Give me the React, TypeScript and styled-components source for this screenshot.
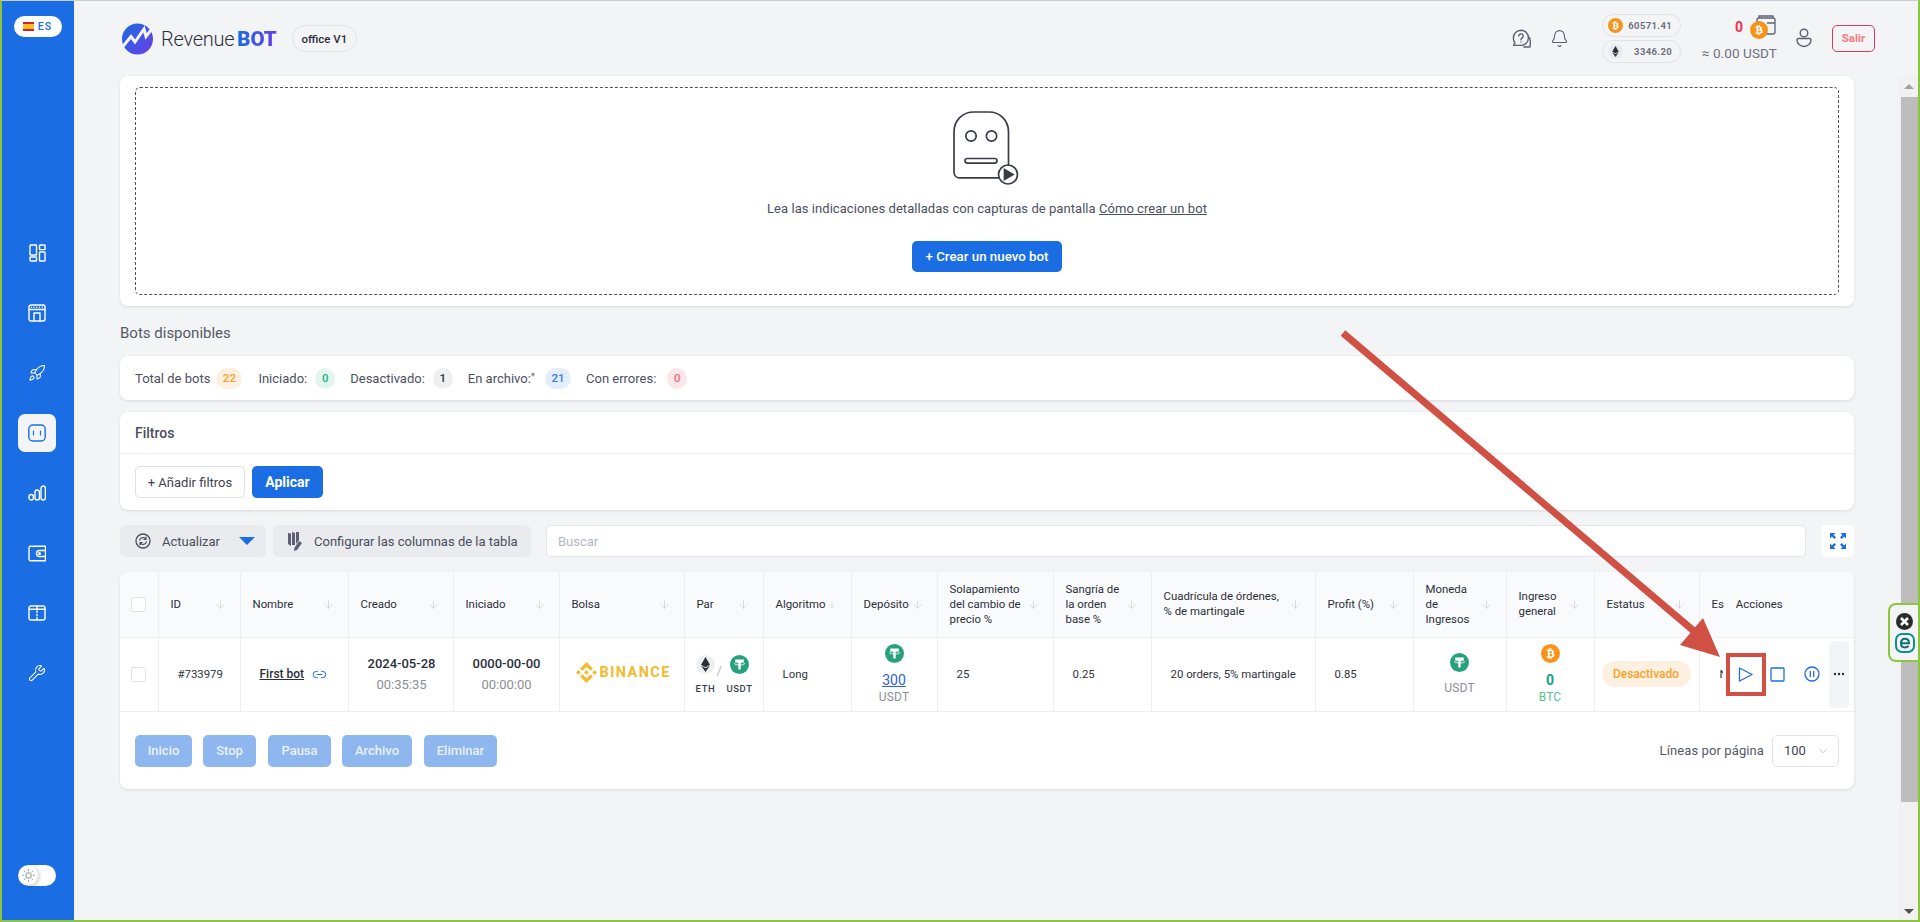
import React from "react";
import styled, { createGlobalStyle } from "styled-components";
import { ArrowDown, Bell, ChevronDown, Link2, Rocket, Wrench } from "lucide-react";
import { FaBtc, FaEthereum } from "react-icons/fa";
import { SiBinance } from "react-icons/si";

const Global = createGlobalStyle`
  html, body { margin: 0; padding: 0; height: 100%; overflow: hidden; background: #f3f4f6; }
  * { box-sizing: border-box; }
  body { font-family: Roboto, "Liberation Sans", sans-serif; color: #2b2f3a; }
`;

const BLUE = "#1a6de3";

const Frame = styled.div`
  position: relative; display: flex; width: 1920px; height: 922px; overflow: hidden;
  background: #f3f4f6; border-top: 1px solid #c9ccd0; border-left: 2px solid #8cc63f;
  border-right: 2px solid #8cc63f; border-bottom: 2px solid #8cc63f;
`;
const Sidebar = styled.aside`
  flex: 0 0 72px; background: ${BLUE}; display: flex; flex-direction: column; align-items: center;
  padding: 15px 2px 34px 0;
`;
const LangPill = styled.div`
  width: 48px; height: 21px; margin-left: 1px; border-radius: 11px; background: #fff; display: flex; align-items: center; justify-content: center; gap: 4px;
  color: ${BLUE}; font-size: 10.5px; font-weight: 500; letter-spacing: 1px;
`;
const Flag = styled.span`
  width: 11px; height: 9px; background: linear-gradient(#d8202c 25%, #f6c02c 25%, #f6c02c 75%, #d8202c 75%);
`;
const NavList = styled.nav`
  display: flex; flex-direction: column; align-items: center; margin-top: 197px; gap: 22px;
`;
const NavItem = styled.div<{ $active?: boolean }>`
  width: 38px; height: 38px; border-radius: 7px; display: flex; align-items: center; justify-content: center;
  color: ${p => (p.$active ? BLUE : "#fff")}; background: ${p => (p.$active ? "#f3f4f6" : "transparent")};
`;
const Toggle = styled.div`
  margin-top: auto; width: 38px; height: 21px; border-radius: 11px; background: #fff; display: flex; align-items: center; padding-left: 1px;
`;
const Knob = styled.div`
  width: 19px; height: 19px; border-radius: 50%; background: #fff; box-shadow: 1px 1px 4px rgba(0,0,0,.25); display: flex; align-items: center; justify-content: center;
`;
const Main = styled.main`
  flex: 1; min-width: 0; padding: 0 64px 0 46px; display: flex; flex-direction: column;
`;
const Header = styled.header`
  height: 75px; flex: none; display: flex; align-items: center; position: relative;
`;
const Logo = styled.div`
  display: flex; align-items: center;
`;
const LogoWord = styled.span`
  font-size: 20px; font-weight: 300; margin-left: 7px; color: #2e3140; letter-spacing: -0.25px;
`;
const LogoBot = styled.span`
  font-size: 20.5px; font-weight: 900; margin-left: 3px;
  background: linear-gradient(90deg, ${BLUE}, #6a3de8); -webkit-background-clip: text; background-clip: text; color: transparent;
`;
const Office = styled.div`
  margin-left: 15px; height: 27px; width: 65px; border-radius: 14px; border: 1px solid #e1e3e8; display: flex; align-items: center; justify-content: center; font-size: 11.5px; font-weight: 500; color: #2b2f3a;
`;
const HeaderRight = styled.div`
  margin-left: auto; margin-right: -21px; display: flex; align-items: center;
`;
const IconBtn = styled.div<{ $ml?: number }>`
  display: flex; margin-left: ${p => p.$ml ?? 0}px; color: #5d6074; margin-top: -1px;
`;
const Rates = styled.div`
  margin-left: 33px; display: flex; flex-direction: column; gap: 3px; margin-top: -1px;
`;
const Rate = styled.div`
  width: 79px; height: 23px; border-radius: 12px; border: 1px solid #dfe1e6; padding: 0 8px 0 5px; display: flex; align-items: center; justify-content: space-between;
  font-size: 9.5px; font-weight: 700; letter-spacing: .35px; color: #6d7280;
`;
const Coin = styled.span<{ $size: number; $bg: string; $fg?: string }>`
  width: ${p => p.$size}px; height: ${p => p.$size}px; flex: none; border-radius: 50%; background: ${p => p.$bg}; color: ${p => p.$fg ?? "#fff"}; display: inline-flex; align-items: center; justify-content: center;
`;
const Balance = styled.div`
  margin-left: 21px; width: 75px; display: flex; flex-direction: column; align-items: flex-end; margin-top: -1px;
`;
const BalanceTop = styled.div`
  position: relative; height: 29px; width: 100%; display: flex; align-items: flex-start; padding-left: 33px; padding-top: 4px;
  color: #f5304f; font-size: 14px; font-weight: 700;
`;
const WalletCoin = styled.div`
  position: absolute; left: 48px; top: 6px; display: flex;
`;
const WalletGlyph = styled.svg`
  position: absolute; left: 3px; top: -6px;
`;
const CoinOver = styled.span`
  position: relative; display: flex;
`;
const BalanceValue = styled.div`
  font-size: 13.5px; color: #6b7082; white-space: nowrap; letter-spacing: .1px; margin-top: 1px;
`;
const Salir = styled.button`
  margin-left: 20px; width: 43px; height: 27px; border-radius: 5px; border: 1px solid #dc3a5b; background: transparent; color: #f77b84; font: 700 11.5px Roboto, sans-serif; padding: 0; margin-top: -1px;
`;
const Card = styled.section`
  background: #fff; border-radius: 8px; box-shadow: 0 1px 3px rgba(40,45,60,.12);
`;
const Hero = styled(Card)`
  flex: none; height: 230px; padding: 11px 15px;
`;
const Dashed = styled.div`
  height: 100%; border: 1px dashed #4f5259; border-radius: 5px; display: flex; flex-direction: column; align-items: center; padding-top: 23px;
`;
const HeroText = styled.p`
  margin: 13px 0 0; font-size: 13px; line-height: 20px; color: #4c5060; letter-spacing: .05px;
`;
const HeroLink = styled.a`
  color: #4c5060; text-decoration: underline;
`;
const Primary = styled.button<{ $w?: number }>`
  height: 31px; width: ${p => p.$w ?? 150}px; background: ${BLUE}; border: 0; border-radius: 5px; color: #fff; font: 500 14px Roboto, sans-serif; padding: 0;
`;
const HeroBtn = styled(Primary)`
  margin-top: 22px; font-size: 13.3px;
`;
const Title = styled.h2`
  flex: none; height: 50px; margin: 0; padding-top: 17px; font-size: 15px; line-height: 20px; font-weight: 400; color: #555a66;
`;
const StatsCard = styled(Card)`
  flex: none; height: 44px; padding: 0 15px; display: flex; align-items: center; font-size: 13px; color: #4c5060;
`;
const StatLabel = styled.span<{ $ml?: number }>`
  margin-left: ${p => p.$ml ?? 0}px;
`;
const Badge = styled.span<{ $bg: string; $fg: string; $w: number; $ml: number }>`
  width: ${p => p.$w}px; height: 21px; margin-left: ${p => p.$ml}px; border-radius: 11px; background: ${p => p.$bg}; color: ${p => p.$fg}; font-size: 11.5px; font-weight: 500; display: flex; align-items: center; justify-content: center;
`;
const Filters = styled(Card)`
  flex: none; height: 98px; margin-top: 12px; display: flex; flex-direction: column;
`;
const FiltersHead = styled.div`
  height: 43px; border-bottom: 1px solid #eceef2; padding-left: 15px; display: flex; align-items: center; font-size: 14px; font-weight: 500; color: #4a4e5c;
`;
const FiltersBody = styled.div`
  padding: 12px 15px; display: flex; gap: 7px;
`;
const Ghost = styled.button`
  height: 32px; width: 110px; background: #fff; border: 1px solid #dfe1e6; border-radius: 5px; font: 400 13px Roboto, sans-serif; color: #3f4350; padding: 0;
`;
const Apply = styled(Primary)`
  height: 32px; width: 71px; font-weight: 700;
`;
const Toolbar = styled.div`
  flex: none; height: 32px; margin-top: 15px; display: flex; gap: 7px;
`;
const ToolButton = styled.div<{ $w: number }>`
  width: ${p => p.$w}px; flex: none; background: #e9ebef; border-radius: 5px; display: flex; align-items: center; padding-left: 15px; gap: 11px; font-size: 13px; color: #4a4e5c;
`;
const Caret = styled.span`
  margin-left: 8px; border-left: 8px solid transparent; border-right: 8px solid transparent; border-top: 8px solid ${BLUE};
`;
const Search = styled.div`
  flex: 1; margin-left: 8px; background: #fff; border: 1px solid #e3e5ea; border-radius: 5px; display: flex; align-items: center; padding-left: 11px; font-size: 13px; color: #b4b7bf;
`;
const Expand = styled.div`
  flex: none; width: 33px; margin-left: 8px; background: #fff; border-radius: 5px; display: flex; align-items: center; justify-content: center;
`;
const TableCard = styled(Card)`
  flex: none; height: 217px; margin-top: 15px; overflow: hidden;
`;
const Table = styled.table`
  width: 1734px; border-collapse: collapse; table-layout: fixed; font-size: 11.4px;
`;
const Th = styled.th`
  height: 65px; background: #f9fafc; padding: 0 13px 0 12px; font-weight: 400; font-size: 11.4px; line-height: 15px; text-align: left; color: #2b2f3a; border-right: 1px solid #eceef3; border-bottom: 1px solid #eceef3;
  &:first-child { padding-left: 11px; }
  &:last-child { border-right: 0; }
`;
const HeadInner = styled.div`
  display: flex; align-items: center; justify-content: space-between; gap: 2px;
`;
const ActionHead = styled.div`
  display: flex; gap: 12px;
`;
const Td = styled.td<{ $pl?: number }>`
  height: 74px; padding: 0 0 0 ${p => p.$pl ?? 19}px; font-size: 11.4px; color: #2f3340; border-right: 1px solid #eceef3; border-bottom: 1px solid #eceef3;
  &:last-child { border-right: 0; }
`;
const CheckBox = styled.span`
  display: block; width: 15px; height: 15px; background: #fff; border: 1px solid #e1e3e8; border-radius: 2px;
`;
const BotLink = styled.span`
  display: inline-flex; align-items: center; gap: 8px; font-weight: 500; font-size: 12px; color: #2b2f3a;
`;
const Under = styled.span`
  text-decoration: underline;
`;
const Stack = styled.div`
  display: inline-flex; flex-direction: column; align-items: center;
`;
const DateMain = styled.div`
  font-size: 13px; font-weight: 500; line-height: 20px; color: #2b2f3a;
`;
const DateSub = styled.div`
  font-size: 13px; line-height: 20px; margin-top: 1px; color: #8b8e96;
`;
const BinanceMark = styled.div`
  display: inline-flex; align-items: center; gap: 3px; color: #f3ba2f; font-size: 14.5px; font-weight: 700; letter-spacing: 1.4px;
`;
const Pair = styled.div`
  display: grid; grid-template-columns: 34px 34px; justify-content: start; position: relative;
`;
const PairItem = styled.div`
  display: flex; flex-direction: column; align-items: center; gap: 9px; font-size: 9.5px; font-weight: 500; letter-spacing: .6px; color: #3b3f4b; line-height: 11px; white-space: nowrap;
`;
const Slash = styled.span`
  position: absolute; left: 28px; top: 8px; font-size: 13px; color: #b8bbc2;
`;
const CellCenter = styled.div`
  display: flex; flex-direction: column; align-items: center;
`;
const Amount = styled.a`
  font-size: 14px; line-height: 18px; margin-top: 8px; color: #2a63c9; text-decoration: underline;
`;
const Sub = styled.div<{ $color?: string; $mt?: number }>`
  font-size: 12px; line-height: 16px; color: ${p => p.$color ?? "#8b8e96"}; margin-top: ${p => p.$mt ?? 0}px; letter-spacing: .2px;
`;
const Zero = styled.div`
  font-size: 14px; font-weight: 700; line-height: 18px; margin-top: 8px; color: #12a37f;
`;
const StatusPill = styled.span`
  display: flex; align-items: center; justify-content: center; width: 89px; height: 26px; border-radius: 13px; background: #fdf0e0; color: #f7a128; font-weight: 500; font-size: 12px;
`;
const ActionsCell = styled.div`
  display: flex; align-items: center; height: 67px;
`;
const Clipped = styled.span`
  width: 3px; overflow: hidden; white-space: nowrap; flex: none;
`;
const ActionGlyph = styled.svg<{ $ml: number }>`
  margin-left: ${p => p.$ml}px; flex: none; fill: none; stroke: ${BLUE}; stroke-width: 1.3;
`;
const More = styled.div`
  width: 20px; height: 67px; margin-left: 9px; background: #f3f4f6; border-radius: 5px; display: flex; align-items: center; justify-content: center; color: #2b2f3a;
`;
const FooterRow = styled.div`
  display: flex; align-items: center; height: 78px; padding: 0 15px;
`;
const Bulk = styled.button<{ $w: number; $ml?: number }>`
  width: ${p => p.$w}px; height: 32px; margin-left: ${p => p.$ml ?? 0}px; background: #8eb6ef; color: #e9f1fc; border: 0; border-radius: 5px; font: 500 13px Roboto, sans-serif; padding: 0;
`;
const PerPage = styled.div`
  margin-left: auto; font-size: 13px; color: #555a66; letter-spacing: .1px;
`;
const Select = styled.div`
  width: 67px; height: 32px; margin-left: 8px; background: #fff; border: 1px solid #e1e3e8; border-radius: 5px; display: flex; align-items: center; justify-content: space-between; padding: 0 8px 0 11px; font-size: 13px; color: #3f4350;
`;
const ScrollBar = styled.div`
  position: absolute; right: 0; top: 75px; bottom: 0; width: 19px; background: #f1f1f1; display: flex; flex-direction: column;
`;
const ScrollArrow = styled.div<{ $down?: boolean }>`
  height: ${p => (p.$down ? 18 : 21)}px; margin-top: ${p => (p.$down ? "auto" : 0)}; display: flex; align-items: center; justify-content: center;
  &::before {
    content: ""; border-left: 5px solid transparent; border-right: 5px solid transparent;
    ${p => (p.$down ? "border-top: 5px solid #505050;" : "border-bottom: 5px solid #a3a3a3;")}
  }
`;
const ScrollThumb = styled.div`
  width: 17px; margin-left: 2px; height: 705px; background: #bdbdbd;
`;
const Widget = styled.div`
  position: absolute; right: 0; top: 602px; width: 30px; height: 59px; background: #f3f4f6; border: 2px solid #8cc63f; border-right: 0; border-radius: 8px 0 0 8px; display: flex; flex-direction: column; align-items: center; justify-content: center; gap: 3px; padding-left: 1px;
`;
const Overlay = styled.svg`
  position: absolute; left: -2px; top: -1px; pointer-events: none;
`;

const Svg: React.FC<{ w: number; h: number; children: React.ReactNode }> = ({ w, h, children }) => (
  <svg width={w} height={h} viewBox={`0 0 ${w} ${h}`} fill="none" stroke="currentColor" strokeWidth="1.4" strokeLinecap="round" strokeLinejoin="round">
    {children}
  </svg>
);

const DashIcon = () => (
  <Svg w={17} h={18}>
    <rect x="1" y="1" width="6.5" height="10" rx=".6" /><rect x="10.5" y="1" width="5.5" height="4.6" rx=".6" />
    <rect x="1" y="13" width="6.5" height="4" rx=".6" /><rect x="10.5" y="8" width="5.5" height="9" rx=".6" />
  </Svg>
);
const ShopIcon = () => (
  <Svg w={18} h={18}>
    <rect x="1" y="1" width="16" height="16" rx="2" /><path d="M1 5.5h16M3.5 3.2v.1M6 3.2v.1M8.7 3.2v.1M11.5 3.2v.1M14.3 3.2v.1" />
    <path d="M6 17V9h6v8" />
  </Svg>
);
const BotNavIcon = () => (
  <Svg w={18} h={18}>
    <rect x=".8" y="1" width="16.4" height="16" rx="4" /><path d="M5.500 7v4M12.500 7v4" strokeWidth="1.2" />
  </Svg>
);
const BarsIcon = () => (
  <Svg w={18} h={16}>
    <rect x="1" y="9.5" width="4.4" height="5.5" rx="2.2" /><rect x="7" y="5" width="4.4" height="10" rx="2.2" /><rect x="13" y="1" width="4.4" height="14" rx="2.2" />
  </Svg>
);
const WalletIcon = () => (
  <Svg w={18} h={17}>
    <path d="M2.5 1.2h15v14.6h-15A1.5 1.5 0 0 1 1 14.3V2.7a1.5 1.5 0 0 1 1.5-1.5Z" /><path d="M17.5 5.5h-6a3 3 0 0 0 0 6h6" /><circle cx="11.5" cy="8.5" r=".8" />
  </Svg>
);
const BoxIcon = () => (
  <Svg w={18} h={16}>
    <rect x="1" y="1" width="16" height="14" rx="2" /><path d="M1 4.2h16M9 1v3M9 6v1.4M9 9.4v1.4M9 12.8v2.2" />
  </Svg>
);
const HelpIcon = () => (
  <Svg w={20} h={19}>
    <path d="M9 1.2a7.6 7.6 0 0 1 7.4 7.800c0 4.300-3.400 7.400-7.400 7.400H1.600l1.300-2.500A8 8 0 0 1 1.400 9 7.600 7.600 0 0 1 9 1.200Z" />
    <path d="M6.800 7a2.200 2.200 0 1 1 3.400 1.900c-.8.500-1.200 1-1.200 1.900M9 12.900v.1" />
    <path d="M17.400 8.500c1 1.200 1.300 6.200.5 9.500h-6" />
  </Svg>
);
const UserIcon = () => (
  <Svg w={16} h={20}>
    <circle cx="8" cy="5" r="3.800" /><path d="M1 12c0-1 .5-1.500 1.500-1.500h11c1 0 1.500.5 1.500 1.500a7 6.500 0 0 1-14 0Z" />
  </Svg>
);
const RobotIcon = () => (
  <svg width="68" height="75" viewBox="0 0 68 75" fill="none" stroke="#3a3d45" strokeWidth="1.7">
    <path d="M55.500 55V21C55.500 9.500 47 1 36 1H21C9.500 1 1 9.500 1 21v40c0 3.500 2.500 5.800 5.500 5.800H46" />
    <circle cx="18" cy="25" r="5.200" /><circle cx="38.500" cy="25" r="5.200" />
    <rect x="12" y="47.500" width="32" height="4.600" rx="2.300" />
    <circle cx="55" cy="63.500" r="9.500" /><path d="M51.500 58.500v10l8.500-5Z" fill="#3a3d45" />
  </svg>
);
const RefreshIcon = () => (
  <Svg w={16} h={16}>
    <circle cx="8" cy="8" r="7" strokeWidth="1.3" /><path d="M4.600 7.200A3.500 3.500 0 0 1 11 6.200M11.400 8.800A3.500 3.500 0 0 1 5 9.800M11 4.200v2.200H8.900M5 11.800V9.600h2.100" strokeWidth="1.2" />
  </Svg>
);
const ColumnsIcon = () => (
  <svg width="15" height="20" viewBox="0 0 15 20" fill="#5d6074">
    <path d="M0 2l3 .5V15L0 13ZM4 1l3 1v12H4ZM8 1h3v8l-3 4Z" /><path d="M11 10l3 2-5 7-3 1 .5-3.200Z" />
  </svg>
);
const ExpandIcon = () => (
  <svg width="16" height="16" viewBox="0 0 16 16" fill={BLUE}>
    <path d="M0 0h5.500L3.600 1.900 6 4.300 4.300 6 1.900 3.600 0 5.500ZM16 0v5.500l-1.900-1.900L11.700 6 10 4.300l2.400-2.400L10.500 0ZM0 16v-5.500l1.900 1.900L4.300 10 6 11.700l-2.400 2.400L5.500 16ZM16 16h-5.500l1.900-1.900L10 11.700 11.700 10l2.400 2.400 1.900-1.900Z" />
  </svg>
);
const LogoMark = () => (
  <svg width="34" height="32" viewBox="0 0 34 32">
    <defs>
      <linearGradient id="lg" x1="0" y1="0" x2="1" y2="1"><stop offset="0" stopColor="#1a6de3" /><stop offset="1" stopColor="#6a3de8" /></linearGradient>
    </defs>
    <circle cx="17.500" cy="16" r="15.500" fill="url(#lg)" />
    <path d="M0 27 11 13.500l4 5.500L24 6l2 7.500L33.500 4" fill="none" stroke="#f3f4f6" strokeWidth="3" />
  </svg>
);
const Sun = () => (
  <svg width="13" height="13" viewBox="0 0 13 13" fill="none" stroke="#8b8e96" strokeWidth="1">
    <rect x="4" y="4" width="5" height="5" rx="1" /><path d="M6.500 .5v1.500M6.500 11v1.500M.5 6.500H2M11 6.500h1.500M2.200 2.200l1 1M9.800 9.800l1 1M2.200 10.800l1-1M9.800 3.200l1-1" />
  </svg>
);
const Eset = () => (
  <svg width="17" height="17" viewBox="0 0 17 17">
    <circle cx="8.500" cy="8.500" r="8.500" fill="#2b2b2b" /><path d="M5 5l7 7M12 5l-7 7" stroke="#fff" strokeWidth="2.600" />
  </svg>
);
const EIcon = () => (
  <svg width="20" height="20" viewBox="0 0 20 20" fill="none">
    <rect x="1" y="1" width="18" height="18" rx="6" stroke="#0f8e92" strokeWidth="2" />
    <path d="M6 10.200h8c0-3-1.600-4.500-4-4.500s-4 1.800-4 4.500 1.800 4.200 4 4.200c1.500 0 2.800-.5 3.500-1.500" stroke="#0f6f75" strokeWidth="2" />
  </svg>
);

const columns = [38, 82, 108, 105, 106, 125, 79, 88, 86, 116, 98, 164, 98, 93, 88, 105, 155];
const heads: React.ReactNode[] = [
  "ID", "Nombre", "Creado", "Iniciado", "Bolsa", "Par", "Algoritmo", "Depósito",
  <>Solapamiento<br />del cambio de<br />precio %</>,
  <>Sangría de<br />la orden<br />base %</>,
  <>Cuadrícula de órdenes,<br />% de martingale</>,
  "Profit (%)",
  <>Moneda<br />de<br />Ingresos</>,
  <>Ingreso<br />general</>,
  "Estatus",
];

const Sort = () => <ArrowDown size={13} color="#c6c9d0" strokeWidth={1.2} />;
const Tether = () => (
  <svg width="19" height="19" viewBox="0 0 19 19">
    <circle cx="9.500" cy="9.500" r="9.500" fill="#26a17b" />
    <path d="M5.200 4.600h8.600v2.300h-3.100v7.500H8.300V6.900H5.200Z" fill="#fff" />
    <ellipse cx="9.500" cy="8.700" rx="5.200" ry="1.300" fill="none" stroke="#fff" strokeWidth=".8" />
  </svg>
);
const BtcCoin = ({ size, icon }: { size: number; icon: number }) => (
  <Coin $size={size} $bg="#f7931a"><FaBtc size={icon} /></Coin>
);

export default function App() {
  return (
    <Frame>
      <Global />
      <Sidebar>
        <LangPill><Flag />ES</LangPill>
        <NavList>
          <NavItem><DashIcon /></NavItem>
          <NavItem><ShopIcon /></NavItem>
          <NavItem><Rocket size={18} strokeWidth={1.4} /></NavItem>
          <NavItem $active><BotNavIcon /></NavItem>
          <NavItem><BarsIcon /></NavItem>
          <NavItem><WalletIcon /></NavItem>
          <NavItem><BoxIcon /></NavItem>
          <NavItem><Wrench size={18} strokeWidth={1.4} /></NavItem>
        </NavList>
        <Toggle><Knob><Sun /></Knob></Toggle>
      </Sidebar>
      <Main>
        <Header>
          <Logo><LogoMark /><LogoWord>Revenue</LogoWord><LogoBot>BOT</LogoBot></Logo>
          <Office>office V1</Office>
          <HeaderRight>
            <IconBtn><HelpIcon /></IconBtn>
            <IconBtn $ml={18}><Bell size={19} strokeWidth={1.4} /></IconBtn>
            <Rates>
              <Rate><BtcCoin size={15} icon={9} />60571.41</Rate>
              <Rate><Coin $size={15} $bg="#e9eaed" $fg="#2b2f3a"><FaEthereum size={11} /></Coin>3346.20</Rate>
            </Rates>
            <Balance>
              <BalanceTop>0<WalletCoin>
                <WalletGlyph width="27" height="22" viewBox="0 0 27 22" fill="none" stroke="#5d6074" strokeWidth="1.3">
                  <rect x="4" y="3" width="18" height="16" rx="2" /><path d="M6 3V1h14v2M14 8h8" />
                </WalletGlyph>
                <CoinOver><BtcCoin size={18} icon={10} /></CoinOver>
              </WalletCoin></BalanceTop>
              <BalanceValue>≈ 0.00 USDT</BalanceValue>
            </Balance>
            <IconBtn $ml={19}><UserIcon /></IconBtn>
            <Salir>Salir</Salir>
          </HeaderRight>
        </Header>
        <Hero>
          <Dashed>
            <RobotIcon />
            <HeroText>Lea las indicaciones detalladas con capturas de pantalla <HeroLink>Cómo crear un bot</HeroLink></HeroText>
            <HeroBtn>+ Crear un nuevo bot</HeroBtn>
          </Dashed>
        </Hero>
        <Title>Bots disponibles</Title>
        <StatsCard>
          <StatLabel>Total de bots</StatLabel>
          <Badge $w={26} $ml={6} $bg="#fdf0e0" $fg="#f7a128">22</Badge>
          <StatLabel $ml={16}>Iniciado:</StatLabel>
          <Badge $w={20} $ml={8} $bg="#e3f6ee" $fg="#1cb37f">0</Badge>
          <StatLabel $ml={15}>Desactivado:</StatLabel>
          <Badge $w={20} $ml={8} $bg="#eeeff1" $fg="#2b2f3a">1</Badge>
          <StatLabel $ml={15}>En archivo:"</StatLabel>
          <Badge $w={26} $ml={10} $bg="#e3eefd" $fg="#3a78e6">21</Badge>
          <StatLabel $ml={15}>Con errores:</StatLabel>
          <Badge $w={20} $ml={11} $bg="#fce6ea" $fg="#f7687a">0</Badge>
        </StatsCard>
        <Filters>
          <FiltersHead>Filtros</FiltersHead>
          <FiltersBody><Ghost>+ Añadir filtros</Ghost><Apply>Aplicar</Apply></FiltersBody>
        </Filters>
        <Toolbar>
          <ToolButton $w={146}><RefreshIcon />Actualizar<Caret /></ToolButton>
          <ToolButton $w={258}><ColumnsIcon />Configurar las columnas de la tabla</ToolButton>
          <Search>Buscar</Search>
          <Expand><ExpandIcon /></Expand>
        </Toolbar>
        <TableCard>
          <Table>
            <colgroup>{columns.map((c, i) => <col key={i} style={{ width: c }} />)}</colgroup>
            <thead>
              <tr>
                <Th><CheckBox /></Th>
                {heads.map((h, i) => <Th key={i}><HeadInner><span>{h}</span><Sort /></HeadInner></Th>)}
                <Th><ActionHead><span>Es</span><span>Acciones</span></ActionHead></Th>
              </tr>
            </thead>
            <tbody>
              <tr>
                <Td $pl={11}><CheckBox /></Td>
                <Td>#733979</Td>
                <Td><BotLink><Under>First bot</Under><Link2 size={15} color={BLUE} strokeWidth={1.6} /></BotLink></Td>
                <Td><Stack><DateMain>2024-05-28</DateMain><DateSub>00:35:35</DateSub></Stack></Td>
                <Td><Stack><DateMain>0000-00-00</DateMain><DateSub>00:00:00</DateSub></Stack></Td>
                <Td $pl={16}><BinanceMark><SiBinance size={21} />BINANCE</BinanceMark></Td>
                <Td $pl={4}>
                  <Pair>
                    <PairItem><Coin $size={19} $bg="#eeeff1" $fg="#2b2f3a"><FaEthereum size={15} /></Coin>ETH</PairItem>
                    <PairItem><Tether />USDT</PairItem>
                    <Slash>/</Slash>
                  </Pair>
                </Td>
                <Td>Long</Td>
                <Td $pl={0}><CellCenter><Tether /><Amount>300</Amount><Sub>USDT</Sub></CellCenter></Td>
                <Td>25</Td>
                <Td>0.25</Td>
                <Td>20 orders, 5% martingale</Td>
                <Td>0.85</Td>
                <Td $pl={0}><CellCenter><Tether /><Sub $mt={8}>USDT</Sub></CellCenter></Td>
                <Td $pl={0}><CellCenter><BtcCoin size={19} icon={11} /><Zero>0</Zero><Sub $color="#5bbf96">BTC</Sub></CellCenter></Td>
                <Td $pl={7}><StatusPill>Desactivado</StatusPill></Td>
                <Td $pl={20}>
                  <ActionsCell>
                    <Clipped>No</Clipped>
                    <ActionGlyph $ml={15} width="15" height="15" viewBox="0 0 15 15"><path d="M1.500 1v13L14 7.500Z" strokeLinejoin="round" /></ActionGlyph>
                    <ActionGlyph $ml={17} width="15" height="15" viewBox="0 0 15 15"><rect x="1" y="1" width="13" height="13" rx="1" /></ActionGlyph>
                    <ActionGlyph $ml={19} width="16" height="16" viewBox="0 0 16 16"><circle cx="8" cy="8" r="7" /><path d="M6.300 5v6M9.700 5v6" /></ActionGlyph>
                    <More>
                      <svg width="12" height="4" viewBox="0 0 12 4" fill="currentColor"><circle cx="2" cy="2" r="1.200" /><circle cx="6" cy="2" r="1.200" /><circle cx="10" cy="2" r="1.200" /></svg>
                    </More>
                  </ActionsCell>
                </Td>
              </tr>
            </tbody>
          </Table>
          <FooterRow>
            <Bulk $w={57}>Inicio</Bulk>
            <Bulk $w={53} $ml={11}>Stop</Bulk>
            <Bulk $w={63} $ml={12}>Pausa</Bulk>
            <Bulk $w={70} $ml={11}>Archivo</Bulk>
            <Bulk $w={73} $ml={12}>Eliminar</Bulk>
            <PerPage>Líneas por página</PerPage>
            <Select>100<ChevronDown size={14} color="#b4b7bf" strokeWidth={1.3} /></Select>
          </FooterRow>
        </TableCard>
      </Main>
      <ScrollBar><ScrollArrow /><ScrollThumb /><ScrollArrow $down /></ScrollBar>
      <Widget><Eset /><EIcon /></Widget>
      <Overlay width="1920" height="922" viewBox="0 0 1920 922">
        <path d="M1343 333 1695 632" stroke="#d05044" strokeWidth="7" fill="none" />
        <path d="M1720 657 1703 618 1680 645Z" fill="#d05044" />
        <rect x="1728" y="655" width="36" height="39" fill="none" stroke="#d05044" strokeWidth="4" />
      </Overlay>
    </Frame>
  );
}
